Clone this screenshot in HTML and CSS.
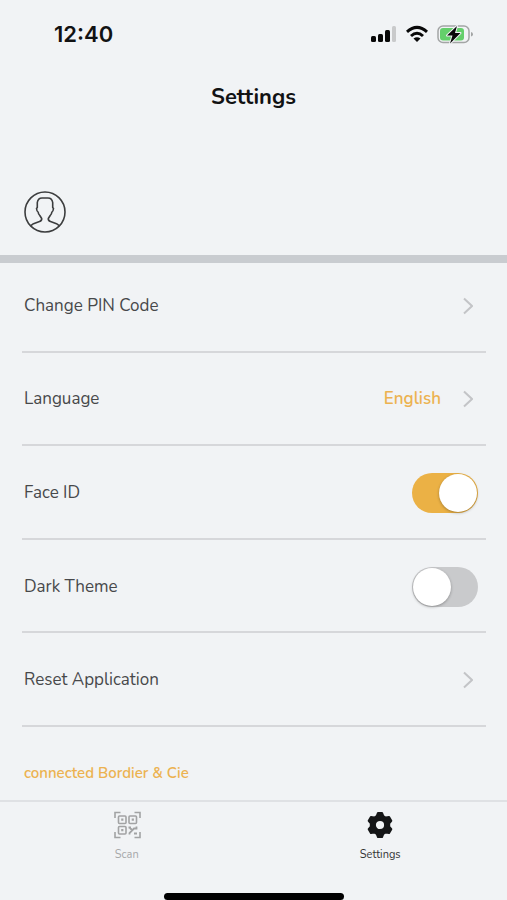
FILE: index.html
```html
<!DOCTYPE html>
<html lang="en">
<head>
<meta charset="utf-8">
<meta name="viewport" content="width=device-width, initial-scale=1">
<title>Settings</title>
<link rel="stylesheet" href="styles.css">
</head>
<body>
<div class="app">
  <div class="status">
    <time class="clock">12:40</time>
    <svg class="status-icons" viewBox="0 0 104 22" width="104" height="22" aria-hidden="true">
      <g fill="#080808">
        <rect x="1" y="13" width="5" height="6" rx="1.5"/>
        <rect x="8" y="11" width="5" height="8" rx="1.5"/>
        <rect x="15" y="7" width="5" height="12" rx="1.5"/>
      </g>
      <rect x="22" y="3" width="4" height="16" rx="1.5" fill="#c9cacb"/>
      <g fill="none" stroke="#080808" stroke-width="3">
        <path d="M37 8.800Q47 0 57 8.800"/>
        <path d="M41 13Q47 7.500 53 13"/>
      </g>
      <path d="M43.500 15.500Q47 12.800 50.500 15.500L47 19z" fill="#080808"/>
      <rect x="68" y="3" width="31" height="16.500" rx="5" fill="none" stroke="#a3a5a5" stroke-width="1.500"/>
      <rect x="70" y="5" width="24" height="12.500" rx="3" fill="#64cf6b"/>
      <path d="M101 9q2 .5 2 2.200t-2 2.200z" fill="#a3a5a5"/>
      <path d="M87 3L77 12.500H82.500L80 20.500L90.500 10H85z" fill="#080808" stroke="#f1f3f5" stroke-width="2" stroke-linejoin="round" paint-order="stroke"/>
    </svg>
  </div>

  <header class="header"><h1>Settings</h1></header>

  <main class="main">
    <div class="profile">
      <svg viewBox="0 0 42 42" width="42" height="42" role="img" aria-label="Profile" fill="none" stroke="#3c3d3e" stroke-width="1.600" stroke-linejoin="round">
        <circle cx="21" cy="21" r="20"/>
        <path d="M6.500 34.800L9.500 32.700L15.500 30.600Q18 29.500 17.700 27.500L15.800 24.500Q14.300 23 14.200 21.200Q12.800 20.500 12.500 17.500L13.300 16.500V11.500Q14 7 18 7H24Q28 7 28.700 11.500V16.500L29.500 17.500Q29.200 20.500 27.800 21.200Q27.700 23 26.200 24.500L24.300 27.500Q24 29.500 26.500 30.600L32.500 32.700L35.500 34.800"/>
      </svg>
    </div>

    <ul class="list">
      <li class="row"><button class="item" type="button">
        <span>Change PIN Code</span>
        <svg class="chevron" viewBox="0 0 10 18" width="10" height="18" aria-hidden="true"><path d="M1 1.500L9 9L1 16.500"/></svg>
      </button></li>
      <li class="row"><button class="item" type="button">
        <span>Language</span>
        <span class="value">English</span>
        <svg class="chevron" viewBox="0 0 10 18" width="10" height="18" aria-hidden="true"><path d="M1 1.500L9 9L1 16.500"/></svg>
      </button></li>
      <li class="row">
        <label for="face">Face ID</label>
        <input class="switch" type="checkbox" role="switch" id="face" checked>
      </li>
      <li class="row">
        <label for="dark">Dark Theme</label>
        <input class="switch" type="checkbox" role="switch" id="dark">
      </li>
      <li class="row"><button class="item" type="button">
        <span>Reset Application</span>
        <svg class="chevron" viewBox="0 0 10 18" width="10" height="18" aria-hidden="true"><path d="M1 1.500L9 9L1 16.500"/></svg>
      </button></li>
    </ul>
    <p class="connected">connected Bordier &amp; Cie</p>
  </main>

  <nav class="tabs">
    <a class="tab" href="#scan">
      <svg viewBox="0 0 28 28" width="28" height="28" aria-hidden="true" fill="none" stroke="#a2a3a4" stroke-width="1.600">
        <path d="M2 7V1.500H7.500M21.500 1.500H27V7M2 21v5.500H7.500M21.500 26.500H27V21"/>
        <rect x="5.500" y="5" width="7.500" height="7.500" rx="1"/>
        <rect x="16" y="5" width="7.500" height="7.500" rx="1"/>
        <rect x="5.500" y="15.500" width="7.500" height="7.500" rx="1"/>
        <path d="M8.200 8.700h2.200M18.700 8.700h2.200M8.200 19.200h2.200" stroke-width="2.200"/>
        <path d="M15.500 16.500h2.500M23.500 15.500v2h-2.500L16.500 22v1.500M17 17l2 2M21 22.500h3" stroke-width="1.800"/>
      </svg>
      <span>Scan</span>
    </a>
    <a class="tab tab-active" href="#settings" aria-current="page">
      <svg viewBox="0 0 28 28" width="28" height="28" aria-hidden="true">
        <path fill="#151617" stroke="#151617" stroke-width="2" stroke-linejoin="round" fill-rule="evenodd" d="M12 2h4l1.300 3.200 2.400 1.400 3.400-.6 2.200 3.800-2.100 2.700v3l2.100 2.700-2.200 3.800-3.400-.6-2.400 1.400L16 26h-4l-1.300-3.200-2.400-1.400-3.400.6-2.200-3.800 2.100-2.700v-3L2.700 9.800 4.900 6l3.400.6 2.400-1.400zM14 8.900a5.100 5.100 0 1 0 0 10.200a5.100 5.100 0 1 0 0-10.200z"/>
      </svg>
      <span>Settings</span>
    </a>
  </nav>
  <div class="home"></div>
</div>
</body>
</html>
```
FILE: styles.css
```css
* { box-sizing: border-box; }

body {
  margin: 0;
  background: #f1f3f5;
  color: #47484a;
  font-family: Nunito, "Noto Sans", sans-serif;
  font-size: 17px;
  line-height: 24px;
}

.app {
  display: flex;
  flex-direction: column;
  min-height: 100vh;
}

.status {
  display: flex;
  align-items: center;
  justify-content: space-between;
  height: 68px;
  padding: 0 33px 0 54px;
}

.clock {
  color: #111213;
  font-family: Inter, sans-serif;
  font-size: 22px;
  font-weight: 600;
}

.header {
  display: flex;
  align-items: center;
  justify-content: center;
  height: 58px;
}

h1 {
  margin: 0;
  color: #111213;
  font-size: 22px;
  font-weight: 700;
}

.main {
  display: flex;
  flex: 1;
  flex-direction: column;
}

.profile {
  display: flex;
  align-items: flex-end;
  height: 137px;
  margin-bottom: -4px;
  padding: 0 24px 22px;
  border-bottom: 8px solid #c9ccd0;
}

.list {
  display: grid;
  flex: 1;
  grid-auto-rows: 1fr;
  margin: 0;
  padding: 0 21px 0 22px;
  list-style: none;
}

.row {
  display: flex;
  align-items: center;
  justify-content: space-between;
  min-height: 72px;
  padding: 2px 8px 0 2px;
  border-bottom: 2px solid #d6d7da;
}

.item {
  display: flex;
  flex: 1;
  align-items: center;
  gap: 22px;
  padding: 0 5px 0 0;
  border: 0;
  background: none;
  color: inherit;
  font: inherit;
  text-align: left;
}

.value {
  margin-left: auto;
  color: #ecb250;
  font-weight: 600;
}

.chevron {
  flex: none;
  margin-left: auto;
  fill: none;
  stroke: #c3c4c7;
  stroke-width: 2;
}

.value + .chevron { margin-left: 0; }

.switch {
  width: 66px;
  height: 40px;
  margin: 0;
  padding: 1px;
  border-radius: 20px;
  background: #c9cacc;
  appearance: none;
}

.switch::before {
  display: block;
  width: 38px;
  height: 38px;
  border-radius: 50%;
  background: #fff;
  box-shadow: 0 1px 3px rgba(0, 0, 0, 0.3);
  content: "";
}

.switch:checked { background: #ebb145; }
.switch:checked::before { margin-left: auto; }

.connected {
  height: 73px;
  margin: 0;
  padding: 34px 24px 0;
  color: #ecb250;
  font-size: 15px;
  font-weight: 600;
}

.tabs {
  display: flex;
  height: 93px;
  border-top: 2px solid #dfe1e4;
}

.tab {
  display: flex;
  flex: 1;
  flex-direction: column;
  align-items: center;
  gap: 4px;
  padding-top: 9px;
  color: #a7a8aa;
  font-size: 11px;
  text-decoration: none;
}

.tab-active { color: #333436; }

.home {
  width: 180px;
  height: 7px;
  margin: 0 auto;
  border-radius: 4px;
  background: #000;
}
```
